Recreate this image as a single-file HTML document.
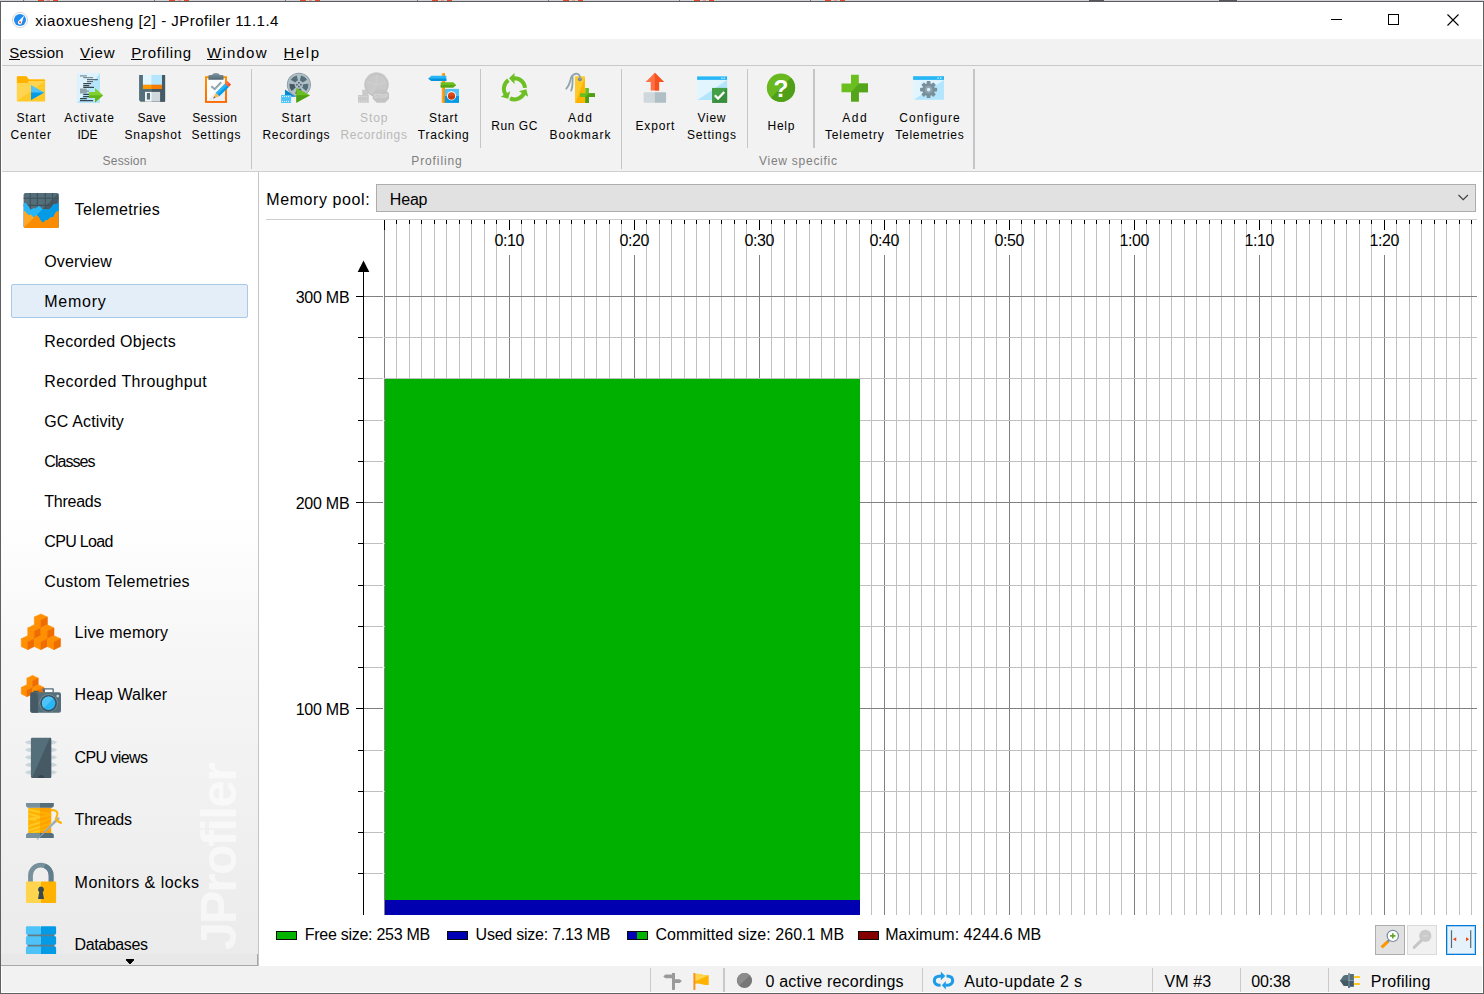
<!DOCTYPE html>
<html lang="en"><head><meta charset="utf-8"><title>xiaoxuesheng [2] - JProfiler 11.1.4</title>
<style>
html,body{margin:0;padding:0;background:#fff;overflow:hidden}
body{width:1484px;height:994px;position:relative;font-family:"Liberation Sans",sans-serif;color:#000}
.a{position:absolute}
.t{position:absolute;white-space:nowrap}
.t u{text-decoration:none;border-bottom:1px solid #000;padding-bottom:0}
svg{position:absolute;overflow:visible}
</style></head><body>
<div class="a" style="left:0px;top:0px;width:1484px;height:1px;background:#d0d2d6;"></div>
<div class="a" style="left:38px;top:0px;width:6px;height:1px;background:#e2492b;"></div>
<div class="a" style="left:47px;top:0px;width:3px;height:1px;background:#ee9a86;"></div>
<div class="a" style="left:53px;top:0px;width:5px;height:1px;background:#e2492b;"></div>
<div class="a" style="left:23px;top:0px;width:1px;height:1px;background:#77797c;"></div>
<div class="a" style="left:169px;top:0px;width:6px;height:1px;background:#e2492b;"></div>
<div class="a" style="left:178px;top:0px;width:3px;height:1px;background:#ee9a86;"></div>
<div class="a" style="left:184px;top:0px;width:5px;height:1px;background:#e2492b;"></div>
<div class="a" style="left:154px;top:0px;width:1px;height:1px;background:#77797c;"></div>
<div class="a" style="left:300px;top:0px;width:6px;height:1px;background:#e2492b;"></div>
<div class="a" style="left:309px;top:0px;width:3px;height:1px;background:#ee9a86;"></div>
<div class="a" style="left:315px;top:0px;width:5px;height:1px;background:#e2492b;"></div>
<div class="a" style="left:285px;top:0px;width:1px;height:1px;background:#77797c;"></div>
<div class="a" style="left:432px;top:0px;width:6px;height:1px;background:#e2492b;"></div>
<div class="a" style="left:441px;top:0px;width:3px;height:1px;background:#ee9a86;"></div>
<div class="a" style="left:447px;top:0px;width:5px;height:1px;background:#e2492b;"></div>
<div class="a" style="left:417px;top:0px;width:1px;height:1px;background:#77797c;"></div>
<div class="a" style="left:563px;top:0px;width:6px;height:1px;background:#e2492b;"></div>
<div class="a" style="left:572px;top:0px;width:3px;height:1px;background:#ee9a86;"></div>
<div class="a" style="left:578px;top:0px;width:5px;height:1px;background:#e2492b;"></div>
<div class="a" style="left:548px;top:0px;width:1px;height:1px;background:#77797c;"></div>
<div class="a" style="left:694px;top:0px;width:6px;height:1px;background:#e2492b;"></div>
<div class="a" style="left:703px;top:0px;width:3px;height:1px;background:#ee9a86;"></div>
<div class="a" style="left:709px;top:0px;width:5px;height:1px;background:#e2492b;"></div>
<div class="a" style="left:679px;top:0px;width:1px;height:1px;background:#77797c;"></div>
<div class="a" style="left:825px;top:0px;width:6px;height:1px;background:#e2492b;"></div>
<div class="a" style="left:834px;top:0px;width:3px;height:1px;background:#ee9a86;"></div>
<div class="a" style="left:840px;top:0px;width:5px;height:1px;background:#e2492b;"></div>
<div class="a" style="left:810px;top:0px;width:1px;height:1px;background:#77797c;"></div>
<div class="a" style="left:1089px;top:0px;width:15px;height:1px;background:#55575a;"></div>
<div class="a" style="left:1219px;top:0px;width:18px;height:1px;background:#55575a;"></div>
<div class="a" style="left:0px;top:1px;width:1484px;height:1px;background:#5a5c5f;"></div>
<div class="a" style="left:1px;top:2px;width:1482px;height:37px;background:#fff;"></div>
<div class="a" style="left:2px;top:39px;width:1480px;height:26px;background:#f2f2f2;"></div>
<div class="a" style="left:2px;top:65px;width:1480px;height:1px;background:#c8c8c8;"></div>
<div class="a" style="left:2px;top:66px;width:1480px;height:105px;background:#f2f2f2;"></div>
<div class="a" style="left:2px;top:171px;width:1480px;height:1px;background:#cfcfcf;"></div>
<div class="a" style="left:1px;top:172px;width:257px;height:782px;background:linear-gradient(180deg,#ffffff 0%,#ffffff 44%,#f6f6f6 62%,#ebebeb 100%);"></div>
<div class="a" style="left:258px;top:172px;width:1px;height:794px;background:#c4c4c4;"></div>
<div class="a" style="left:1px;top:954px;width:257px;height:11px;background:#e8e8e8;border-bottom:1px solid #a8a8a8;"></div>
<div class="a" style="left:2px;top:966px;width:1480px;height:26px;background:#f2f2f2;"></div>
<div class="a" style="left:0px;top:1px;width:1px;height:993px;background:#606060;"></div>
<div class="a" style="left:1483px;top:1px;width:1px;height:993px;background:#5e5e5e;"></div>
<div class="a" style="left:0px;top:993px;width:1484px;height:1px;background:#606060;"></div>
<svg style="left:11px;top:11px" width="18" height="18" viewBox="0 0 18 18">
<circle cx="9" cy="9" r="7.6" fill="#fff" stroke="#d8d8dc" stroke-width="1"/>
<circle cx="9" cy="9" r="6" fill="#1e8bf0"/>
<path d="M13.1 4.6 L10.9 11.6 A2 2 0 1 1 7.6 9.9 Z" fill="#fff"/>
<rect x="8.2" y="10.4" width="1.8" height="1.8" fill="#f4511e"/>
</svg>
<div class="t" style="left:35.30px;top:10.30px;font-size:15px;line-height:21px;letter-spacing:0.488px;color:#000;">xiaoxuesheng [2] - JProfiler 11.1.4</div>
<svg style="left:1320px;top:2px" width="160" height="37" viewBox="1320 2 160 37" shape-rendering="crispEdges">
<rect x="1331" y="19" width="11" height="1" fill="#000"/>
<rect x="1388.5" y="14.5" width="10" height="10" fill="none" stroke="#000" stroke-width="1"/>
<path d="M1447.5 14.5 L1458.5 25.5 M1458.5 14.5 L1447.5 25.5" stroke="#000" stroke-width="1.1" fill="none" shape-rendering="auto"/>
</svg>
<div class="t" style="left:9.30px;top:41.50px;font-size:15px;line-height:21px;letter-spacing:0.156px;color:#000;">Session</div>
<div class="a" style="left:9px;top:59px;width:11px;height:1px;background:#000;"></div>
<div class="t" style="left:79.90px;top:41.50px;font-size:15px;line-height:21px;letter-spacing:0.819px;color:#000;">View</div>
<div class="a" style="left:80px;top:59px;width:11px;height:1px;background:#000;"></div>
<div class="t" style="left:131.30px;top:41.50px;font-size:15px;line-height:21px;letter-spacing:0.713px;color:#000;">Profiling</div>
<div class="a" style="left:131px;top:59px;width:11px;height:1px;background:#000;"></div>
<div class="t" style="left:207.00px;top:41.50px;font-size:15px;line-height:21px;letter-spacing:1.230px;color:#000;">Window</div>
<div class="a" style="left:207px;top:59px;width:15px;height:1px;background:#000;"></div>
<div class="t" style="left:283.50px;top:41.50px;font-size:15px;line-height:21px;letter-spacing:1.550px;color:#000;">Help</div>
<div class="a" style="left:284px;top:59px;width:12px;height:1px;background:#000;"></div>
<div class="a" style="left:251px;top:69px;width:1px;height:100px;background:#c6c6c6;"></div>
<div class="a" style="left:480px;top:69px;width:1px;height:79px;background:#c6c6c6;"></div>
<div class="a" style="left:621px;top:69px;width:1px;height:100px;background:#c6c6c6;"></div>
<div class="a" style="left:747px;top:69px;width:1px;height:79px;background:#c6c6c6;"></div>
<div class="a" style="left:813px;top:69px;width:2px;height:79px;background:#c6c6c6;"></div>
<div class="a" style="left:973px;top:69px;width:2px;height:100px;background:#c6c6c6;"></div>
<div class="t" style="left:16.45px;top:109.94px;font-size:12px;line-height:17px;letter-spacing:0.839px;color:#000;">Start</div>
<div class="t" style="left:10.55px;top:126.94px;font-size:12px;line-height:17px;letter-spacing:0.896px;color:#000;">Center</div>
<div class="t" style="left:64.20px;top:109.94px;font-size:12px;line-height:17px;letter-spacing:1.002px;color:#000;">Activate</div>
<div class="t" style="left:77.55px;top:126.94px;font-size:12px;line-height:17px;letter-spacing:-0.052px;color:#000;">IDE</div>
<div class="t" style="left:137.45px;top:109.94px;font-size:12px;line-height:17px;letter-spacing:0.316px;color:#000;">Save</div>
<div class="t" style="left:124.50px;top:126.94px;font-size:12px;line-height:17px;letter-spacing:0.842px;color:#000;">Snapshot</div>
<div class="t" style="left:192.30px;top:109.94px;font-size:12px;line-height:17px;letter-spacing:0.318px;color:#000;">Session</div>
<div class="t" style="left:191.50px;top:126.94px;font-size:12px;line-height:17px;letter-spacing:0.806px;color:#000;">Settings</div>
<div class="t" style="left:281.50px;top:109.94px;font-size:12px;line-height:17px;letter-spacing:0.914px;color:#000;">Start</div>
<div class="t" style="left:262.40px;top:126.94px;font-size:12px;line-height:17px;letter-spacing:0.722px;color:#000;">Recordings</div>
<div class="t" style="left:360.00px;top:109.94px;font-size:12px;line-height:17px;letter-spacing:0.905px;color:#b9b9b9;">Stop</div>
<div class="t" style="left:340.45px;top:126.94px;font-size:12px;line-height:17px;letter-spacing:0.645px;color:#b9b9b9;">Recordings</div>
<div class="t" style="left:428.90px;top:109.94px;font-size:12px;line-height:17px;letter-spacing:0.864px;color:#000;">Start</div>
<div class="t" style="left:417.80px;top:126.94px;font-size:12px;line-height:17px;letter-spacing:0.776px;color:#000;">Tracking</div>
<div class="t" style="left:491.25px;top:118.34px;font-size:12px;line-height:17px;letter-spacing:0.550px;color:#000;">Run GC</div>
<div class="t" style="left:568.00px;top:109.94px;font-size:12px;line-height:17px;letter-spacing:1.324px;color:#000;">Add</div>
<div class="t" style="left:549.60px;top:126.94px;font-size:12px;line-height:17px;letter-spacing:0.969px;color:#000;">Bookmark</div>
<div class="t" style="left:635.50px;top:118.34px;font-size:12px;line-height:17px;letter-spacing:0.823px;color:#000;">Export</div>
<div class="t" style="left:697.60px;top:109.94px;font-size:12px;line-height:17px;letter-spacing:0.669px;color:#000;">View</div>
<div class="t" style="left:686.90px;top:126.94px;font-size:12px;line-height:17px;letter-spacing:0.834px;color:#000;">Settings</div>
<div class="t" style="left:767.55px;top:118.34px;font-size:12px;line-height:17px;letter-spacing:0.740px;color:#000;">Help</div>
<div class="t" style="left:842.25px;top:109.94px;font-size:12px;line-height:17px;letter-spacing:1.474px;color:#000;">Add</div>
<div class="t" style="left:825.00px;top:126.94px;font-size:12px;line-height:17px;letter-spacing:0.848px;color:#000;">Telemetry</div>
<div class="t" style="left:899.20px;top:109.94px;font-size:12px;line-height:17px;letter-spacing:1.071px;color:#000;">Configure</div>
<div class="t" style="left:895.35px;top:126.94px;font-size:12px;line-height:17px;letter-spacing:0.694px;color:#000;">Telemetries</div>
<div class="t" style="left:102.60px;top:152.64px;font-size:12px;line-height:17px;letter-spacing:0.185px;color:#7e7e7e;">Session</div>
<div class="t" style="left:411.25px;top:152.64px;font-size:12px;line-height:17px;letter-spacing:0.893px;color:#7e7e7e;">Profiling</div>
<div class="t" style="left:759.00px;top:152.64px;font-size:12px;line-height:17px;letter-spacing:0.738px;color:#7e7e7e;">View specific</div>
<svg style="left:0;top:66px" width="1000" height="106" viewBox="0 66 1000 106">
<!-- Start Center: folder + play -->
<g>
<path d="M16.9 77.1 q0 -0.8 0.8 -0.8 h8.2 q0.7 0 1.1 0.6 l1.8 2.7 h15.5 q0.85 0 0.85 0.85 v20.2 q0 0.85 -0.85 0.85 h-26.6 q-0.8 0 -0.8 -0.85 z" fill="#ffca28"/>
<path d="M16.9 82.9 H27 L29.2 80.9 H45.15 L16.9 100.9 z" fill="#ffd54f"/>
<path d="M16.9 77.1 q0 -0.8 0.8 -0.8 h8.2 q0.7 0 1.1 0.6 l1.8 2.7 h15.5 q0.85 0 0.85 0.85 v0.5 h-16.2 l-1.6 2 h-10.45 z" fill="#ffb300"/>
<path d="M31 84.9 L44.1 92.5 L31 100.1 z" fill="#4fc3f7"/>
<path d="M31 92.5 H44.1 L31 100.1 z" fill="#039be5"/>
</g>
<!-- Activate IDE -->
<g>
<rect x="77.1" y="73" width="22.9" height="30" fill="#b3e5fc"/>
<path d="M77.1 73 H100 L77.1 103 z" fill="#def3fd"/>
<g stroke-width="1.25" fill="none">
<path d="M80 75.9 h6.8" stroke="#90a4ae" stroke-width="1.6"/>
<path d="M83.2 77.6 h9.9" stroke="#78909c"/>
<path d="M87 79.5 h10.9 M87 81.5 h6.1" stroke="#546e7a"/>
<path d="M83.2 83.5 h8 M83.2 85.5 h6.1 M83.2 87.4 h10.8 M83.2 94.4 h6 M83.2 96.5 h6 M80 98.5 h6.8 M80 100.5 h13.1" stroke="#37474f"/>
</g>
<path d="M80 88.6 h6.8 v1.7 h2.2 v1.8 h-2.2 v1.5 h-6.8 z" fill="#90a4ae"/>
<path d="M89 92.1 h6 v-4.2 l8.1 7.4 l-8.1 7.3 v-4.6 h-6 z" fill="#7fd12f"/>
<path d="M89 95.3 h14.1 l-8.1 7.3 v-4.6 h-6 z" fill="#64b51c"/>
</g>
<!-- Save Snapshot -->
<g>
<path d="M139.1 74.9 h26 v26 q0 0.75 -0.75 0.75 h-23.8 l-1.45 -1.45 z" fill="#546e7a"/>
<path d="M151.9 74.9 h13.2 v26 q0 0.75 -0.75 0.75 h-12.45 z" fill="#455a64"/>
<rect x="142.9" y="74.9" width="9" height="10" fill="#e1f5fe"/>
<rect x="151.9" y="74.9" width="10.1" height="10" fill="#b3e5fc"/>
<rect x="142.9" y="84.8" width="9" height="4.2" fill="#ff9800"/>
<rect x="151.9" y="84.8" width="10.1" height="4.2" fill="#f57c00"/>
<rect x="145" y="91.9" width="6.9" height="9.75" fill="#f3f5f6"/>
<rect x="151.9" y="91.9" width="8.2" height="9.75" fill="#cfd8dc"/>
<rect x="146.9" y="93" width="3.1" height="6.5" fill="#546e7a"/>
</g>
<!-- Session Settings -->
<g>
<defs><linearGradient id="cbg" x1="0" y1="0" x2="0" y2="1"><stop offset="0" stop-color="#ff9100"/><stop offset="1" stop-color="#ff6a00"/></linearGradient>
<linearGradient id="clg" x1="0" y1="0" x2="0" y2="1"><stop offset="0" stop-color="#8297a2"/><stop offset="1" stop-color="#4f6873"/></linearGradient></defs>
<rect x="206" y="77.2" width="20" height="24.7" fill="#fdfdfd" stroke="url(#cbg)" stroke-width="2"/>
<path d="M207.5 100.9 L225 81 V100.9 z" fill="#eceff1"/>
<path d="M208.4 79.7 v-3.6 q0 -1 1 -1 h2.4 q1.2 -2.1 4.1 -2.1 t4.1 2.1 h2.5 q1 0 1 1 v3.6 z" fill="url(#clg)"/>
<path d="M211.3 86.2 l3.4 3 l6.5 -6.9" stroke="#90a4ae" stroke-width="2" fill="none"/>
<path d="M225.1 83.7 L228.9 87.1 L219.3 96.3 L215.9 92.9 z" fill="#039be5"/>
<path d="M225.1 83.7 L227 85.4 L217.6 94.6 L215.9 92.9 z" fill="#29b6f6"/>
<path d="M225.1 83.7 L227.5 81.2 L231 84.6 L228.9 87.1 z" fill="#f4511e"/>
<path d="M225.1 83.7 L227.5 81.2 L229.2 82.9 L227 85.4 z" fill="#ff7043"/>
<path d="M215.9 92.9 L219.3 96.3 L213.2 98.6 z" fill="#ffb74d"/>
<path d="M214.2 96.3 L215.6 97.7 L213.2 98.6 z" fill="#546e7a"/>
</g>
<!-- Start Recordings -->
<g>
<path d="M285 89.6 L296.3 96.7 H291.1 V95 H285 z" fill="#0288d1"/>
<rect x="281.1" y="95" width="10" height="8" fill="#4fc3f7"/>
<path d="M282 96.6 h8.4 M282 101.5 h8.4" stroke="#e1f5fe" stroke-width="1" stroke-dasharray="1.1 0.9"/>
<circle cx="298.9" cy="84.7" r="12.05" fill="#8397a1"/>
<circle cx="298.9" cy="84.7" r="11.3" fill="#b0bec5"/>
<path d="M300.45 77.98 A6.9 6.9 0 0 1 304.81 81.15" stroke="#546e7a" stroke-width="5.3" fill="none"/><path d="M305.77 84.10 A6.9 6.9 0 0 1 304.11 89.23" stroke="#546e7a" stroke-width="5.3" fill="none"/><path d="M301.60 91.05 A6.9 6.9 0 0 1 296.20 91.05" stroke="#455a64" stroke-width="5.3" fill="none"/><path d="M293.69 89.23 A6.9 6.9 0 0 1 292.03 84.10" stroke="#455a64" stroke-width="5.3" fill="none"/><path d="M292.99 81.15 A6.9 6.9 0 0 1 297.35 77.98" stroke="#546e7a" stroke-width="5.3" fill="none"/>
<g fill="#455a64"><rect x="296.2" y="84.0" width="1.5" height="1.5"/><rect x="300.09999999999997" y="84.0" width="1.5" height="1.5"/><rect x="298.15" y="82.0" width="1.5" height="1.5"/><rect x="298.15" y="85.9" width="1.5" height="1.5"/></g>
<path d="M296.3 87.9 L310 95.35 L296.3 102.8 z" fill="#6abf1e"/>
<path d="M296.3 95.35 H310 L296.3 102.8 z" fill="#4e9f16"/>
</g>
<!-- Stop Recordings (disabled) -->
<g fill="#c9c9c9">
<circle cx="376.5" cy="84.6" r="12.3"/>
<rect x="358" y="95" width="10.8" height="7.7"/>
<path d="M362.2 89.7 h6 v5.5 h-6 z"/>
<path d="M376.7 89.2 h8.3 l4 4 v5.6 l-4 4 h-8.3 l-4 -4 v-5.6 z" fill="#c4c4c4"/>
</g>
<g stroke="#cfcfcf" stroke-width="1.8" opacity=".9"><path d="M376.5 85 v-10.5 M376.5 85 l10 -3.2 M376.5 85 l-10 -3.2 M376.5 85 l-6.2 8.5"/></g>
<circle cx="376.5" cy="85" r="11" fill="none" stroke="#c2c2c2" stroke-width="1"/>
<path d="M359 96.6 h8.4 M359 101.2 h8.4" stroke="#dedede" stroke-width="1" stroke-dasharray="1.2 1"/>
<text x="380.8" y="98.2" font-family="Liberation Sans, sans-serif" font-size="4.6" font-weight="bold" fill="#dcdcdc" text-anchor="middle" letter-spacing="0.3">STOP</text>
<!-- Start Tracking -->
<g>
<rect x="441.8" y="73.2" width="3.1" height="29.7" fill="#ffa726"/>
<rect x="443.4" y="73.2" width="1.5" height="29.7" fill="#fb8c00"/>
<path d="M428.2 78.4 l3.2 -2.7 h14.9 v5.4 h-14.9 z" fill="#29b6f6"/>
<path d="M428.2 78.4 h18.1 v2.7 h-14.9 z" fill="#0393dd"/>
<path d="M440.7 82.2 h12.5 l3 2.7 l-3 2.7 h-12.5 z" fill="#6abf1e"/>
<path d="M440.7 84.9 h15.5 l-3 2.7 h-12.5 z" fill="#58a618"/>
<rect x="444.9" y="88.9" width="14.1" height="7" fill="#4fc3f7"/>
<rect x="444.9" y="95.9" width="14.1" height="7" fill="#039be5"/>
<circle cx="451.5" cy="95.8" r="4.6" fill="#f3f8fb"/>
<circle cx="451.5" cy="95.8" r="3.6" fill="#e04a17"/>
<path d="M447.9 95.8 a3.6 3.6 0 0 0 7.2 0 z" fill="#c8390b"/>
</g>
</svg>
<svg style="left:0;top:66px" width="1000" height="106" viewBox="0 66 1000 106">
<!-- Run GC -->
<path d="M527.05 87.70 A12.6 12.6 0 0 0 514.50 76.20 L514.50 73.00 L508.94 78.34 L514.50 83.90 L514.50 80.20 A8.6 8.6 0 0 1 523.07 88.05 z M507.27 78.48 A12.6 12.6 0 0 0 503.59 95.10 L500.82 96.70 L508.22 98.85 L510.26 91.25 L507.05 93.10 A8.6 8.6 0 0 1 509.57 81.76 z M509.18 100.22 A12.6 12.6 0 0 0 525.41 95.10 L528.18 96.70 L526.34 89.21 L518.74 91.25 L521.95 93.10 A8.6 8.6 0 0 1 510.87 96.59 z" fill="#6cc024"/>
<!-- Add Bookmark -->
<g>
<rect x="575" y="76.2" width="9.9" height="26.7" rx="0.6" fill="#ffca28"/>
<path d="M584.9 77.5 v24.8 q0 0.6 -0.6 0.6 h-8.8 z" fill="#ffb300"/>
<circle cx="579.9" cy="79.3" r="1.7" fill="#5c7a99" stroke="#78909c" stroke-width="0.6"/>
<path d="M580 79 q0.2 -5.2 -3.6 -5.3 q-3.3 0.1 -5.3 3.8 q-1.8 8 -4.8 11.2" stroke="#90a4ae" stroke-width="1.8" fill="none" stroke-linecap="round"/>
<path d="M572.4 76 q0.8 9 -1.2 14.6" stroke="#90a4ae" stroke-width="1.8" fill="none" stroke-linecap="round"/>
<path d="M585.2 88.1 h3.7 v5.1 h6.1 v3.7 h-6.1 v6 h-3.7 v-6 h-5.2 v-3.7 h5.2 z" fill="#6abf1e"/>
<path d="M588.9 93.2 h6.1 v3.7 h-6.1 v6 h-3.7 v-6 z" fill="#4e9f16"/>
</g>
<!-- Export -->
<g>
<path d="M654.8 72.7 L664 81.9 H659.1 V90.6 H650.7 V81.9 H645.6 z" fill="#ff7043"/>
<path d="M654.8 72.7 L664 81.9 H659.1 V90.6 H654.8 z" fill="#f4511e"/>
<path d="M644.4 92.3 h11 v10.5 h-11 q-0.8 0 -0.8 -0.8 v-8.9 q0 -0.8 0.8 -0.8 z" fill="#cfd8dc"/>
<path d="M654.9 92.3 h10.4 q0.8 0 0.8 0.8 v8.9 q0 0.8 -0.8 0.8 h-10.4 z" fill="#b0bec5"/>
</g>
<!-- View Settings -->
<g>
<rect x="697.1" y="76.4" width="30" height="23.7" fill="#e1f5fe"/>
<path d="M727.1 79.9 V100.1 H697.6 z" fill="#b3e5fc"/>
<rect x="697.1" y="76.4" width="30" height="3.5" fill="#29b6f6"/>
<rect x="721.3" y="77.6" width="1.3" height="1.2" fill="#e1f5fe"/><rect x="723.6" y="77.6" width="1.3" height="1.2" fill="#e1f5fe"/>
<rect x="712" y="87.9" width="15.1" height="14.9" fill="#43a047"/>
<path d="M727.1 87.9 V102.8 H712 z" fill="#388e3c"/>
<path d="M714.8 95.3 l3.2 3.3 l6.3 -6.6" stroke="#fff" stroke-width="2.3" fill="none"/>
</g>
<!-- Help -->
<g>
<circle cx="781" cy="87.8" r="14.2" fill="#6ab820"/>
<path d="M791.04 77.76 A14.2 14.2 0 0 1 770.96 97.84 z" fill="#4f9f18"/>
<text x="781" y="96.6" font-family="Liberation Sans, sans-serif" font-weight="bold" font-size="24.5" fill="#fff" text-anchor="middle">?</text>
</g>
<!-- Add Telemetry -->
<g>
<path d="M851 74.7 h7.8 v8.8 h9.2 v8.8 h-9.2 v9.1 h-7.8 v-9.1 h-9.5 v-8.8 h9.5 z" fill="#6abf1e"/>
<path d="M858.8 83.5 h9.2 v8.8 h-9.2 v9.1 h-7.8 v-9.1 z" fill="#55a51c"/>
</g>
<!-- Configure Telemetries -->
<g>
<rect x="913.1" y="76.2" width="30.9" height="23.6" fill="#e1f5fe"/>
<path d="M944 79.9 V99.8 H913.8 z" fill="#b3e5fc"/>
<rect x="913.1" y="76.2" width="30.9" height="3.7" fill="#29b6f6"/>
<rect x="937.5" y="77.5" width="1.4" height="1.2" fill="#e1f5fe"/><rect x="940" y="77.5" width="1.4" height="1.2" fill="#e1f5fe"/>
<g transform="translate(928.6 89.6)">
<g fill="#78909c">
<circle r="6.3"/>
<rect x="-1.9" y="-8.5" width="3.8" height="17" rx="0.7"/>
<rect x="-1.9" y="-8.5" width="3.8" height="17" rx="0.7" transform="rotate(45)"/>
<rect x="-1.9" y="-8.5" width="3.8" height="17" rx="0.7" transform="rotate(90)"/>
<rect x="-1.9" y="-8.5" width="3.8" height="17" rx="0.7" transform="rotate(135)"/>
</g>
<circle r="3.8" fill="#90a4ae"/>
<circle r="1.8" fill="#d9eefb"/>
</g>
</g>
</svg>
<div class="a" style="left:11px;top:284px;width:237px;height:34px;background:#e4eef8;box-sizing:border-box;border:1px solid #a8c9e8;border-radius:2px;"></div>
<div class="t" style="left:100px;top:830px;width:280px;height:50px;line-height:50px;font-size:50px;font-weight:bold;color:rgba(255,255,255,.55);letter-spacing:-1.9px;transform-origin:0 0;transform:translate(94px,120px) rotate(-90deg);">JProfiler</div>
<div class="t" style="left:74.60px;top:199.06px;font-size:16px;line-height:22px;letter-spacing:0.339px;color:#000;">Telemetries</div>
<div class="t" style="left:44.30px;top:251.26px;font-size:16px;line-height:22px;letter-spacing:0.103px;color:#000;">Overview</div>
<div class="t" style="left:44.30px;top:291.26px;font-size:16px;line-height:22px;letter-spacing:0.723px;color:#000;">Memory</div>
<div class="t" style="left:44.30px;top:331.26px;font-size:16px;line-height:22px;letter-spacing:0.222px;color:#000;">Recorded Objects</div>
<div class="t" style="left:44.30px;top:371.26px;font-size:16px;line-height:22px;letter-spacing:0.396px;color:#000;">Recorded Throughput</div>
<div class="t" style="left:44.30px;top:411.26px;font-size:16px;line-height:22px;letter-spacing:0.127px;color:#000;">GC Activity</div>
<div class="t" style="left:44.30px;top:451.26px;font-size:16px;line-height:22px;letter-spacing:-0.951px;color:#000;">Classes</div>
<div class="t" style="left:44.30px;top:491.26px;font-size:16px;line-height:22px;letter-spacing:-0.250px;color:#000;">Threads</div>
<div class="t" style="left:44.30px;top:531.26px;font-size:16px;line-height:22px;letter-spacing:-0.675px;color:#000;">CPU Load</div>
<div class="t" style="left:44.30px;top:571.26px;font-size:16px;line-height:22px;letter-spacing:0.248px;color:#000;">Custom Telemetries</div>
<div class="t" style="left:74.60px;top:622.36px;font-size:16px;line-height:22px;letter-spacing:0.182px;color:#000;">Live memory</div>
<div class="t" style="left:74.60px;top:684.46px;font-size:16px;line-height:22px;letter-spacing:0.052px;color:#000;">Heap Walker</div>
<div class="t" style="left:74.60px;top:747.36px;font-size:16px;line-height:22px;letter-spacing:-0.605px;color:#000;">CPU views</div>
<div class="t" style="left:74.60px;top:809.46px;font-size:16px;line-height:22px;letter-spacing:-0.216px;color:#000;">Threads</div>
<div class="t" style="left:74.60px;top:872.16px;font-size:16px;line-height:22px;letter-spacing:0.469px;color:#000;">Monitors &amp; locks</div>
<div class="t" style="left:74.60px;top:934.46px;font-size:16px;line-height:22px;letter-spacing:-0.387px;color:#000;">Databases</div>
<div class="a" style="left:257px;top:954px;width:1px;height:12px;background:#a8a8a8;"></div>
<svg style="left:120px;top:955px" width="20" height="10" viewBox="120 955 20 10"><path d="M126 959.5 h8 M126.3 960 h7.4 l-3.7 4 z" fill="#000" stroke="#000" stroke-width="1"/></svg>
<svg style="left:0;top:172px" width="258" height="782" viewBox="0 172 258 782">
<g>
<clipPath id="tcl"><rect x="23.6" y="192.9" width="35.1" height="35.1" rx="1.8"/></clipPath>
<clipPath id="tdg"><path d="M58.7 192.9 V228 H23.6 z"/></clipPath>
<g clip-path="url(#tcl)">
<rect x="23" y="192" width="36" height="37" fill="#546e7a"/>
<rect x="23" y="192" width="36" height="37" fill="#455a64" clip-path="url(#tdg)"/>
<g stroke="#3f525c" stroke-width="1.1"><path d="M30.3 192 v20 M37.4 192 v20 M45.3 192 v20 M52.5 192 v20 M23 198.2 h36 M23 205.4 h36"/></g>
<path d="M23.6 203.3 L25.9 203 L28 205.4 L30.3 209.5 L31.9 209.3 L33.5 207.9 L35.1 208.6 L36.5 207.4 L38.8 205.8 L41.1 207.4 L43 209.5 L45.8 209.3 L48.1 209.8 L50.4 208.4 L53.6 204.2 L56 204.4 L57.8 203 L58.7 203.3 L58.7 228 L23.6 228 z" fill="#29b6f6"/>
<path d="M23.6 203.3 L25.9 203 L28 205.4 L30.3 209.5 L31.9 209.3 L33.5 207.9 L35.1 208.6 L36.5 207.4 L38.8 205.8 L41.1 207.4 L43 209.5 L45.8 209.3 L48.1 209.8 L50.4 208.4 L53.6 204.2 L56 204.4 L57.8 203 L58.7 203.3 L58.7 228 L23.6 228 z" fill="#039be5" clip-path="url(#tdg)"/>
<path d="M23.6 211.1 L25.4 211.4 L28.6 215.3 L31 214.6 L33.7 217.6 L36.5 214.9 L38.4 216.7 L41.1 221.3 L43.2 223 L45.3 220.4 L48.1 219.9 L50.4 217.6 L53.2 217.6 L56 212.1 L58.7 210.9 L58.7 228 L23.6 228 z" fill="#ffa726"/>
<path d="M23.6 211.1 L25.4 211.4 L28.6 215.3 L31 214.6 L33.7 217.6 L36.5 214.9 L38.4 216.7 L41.1 221.3 L43.2 223 L45.3 220.4 L48.1 219.9 L50.4 217.6 L53.2 217.6 L56 212.1 L58.7 210.9 L58.7 228 L23.6 228 z" fill="#fb8c00" clip-path="url(#tdg)"/>
</g></g>
<g><path d="M40.9 614.0 L47.449999999999996 617.1 L40.9 620.2 L34.35 617.1 z" fill="#ff8f00" stroke="#ff8f00" stroke-width=".6"/><path d="M34.35 617.1 L40.9 620.2 L40.9 627.95 L34.35 624.85 z" fill="#ff8f00" stroke="#ff8f00" stroke-width=".6"/><path d="M47.449999999999996 617.1 L40.9 620.2 L40.9 627.95 L47.449999999999996 624.85 z" fill="#ef6c00" stroke="#ef6c00" stroke-width=".5"/><path d="M34.35 624.85 L40.9 627.95 L34.35 631.0500000000001 L27.8 627.95 z" fill="#ff8f00" stroke="#ff8f00" stroke-width=".6"/><path d="M27.8 627.95 L34.35 631.0500000000001 L34.35 638.8000000000001 L27.8 635.7 z" fill="#ff8f00" stroke="#ff8f00" stroke-width=".6"/><path d="M40.9 627.95 L34.35 631.0500000000001 L34.35 638.8000000000001 L40.9 635.7 z" fill="#ef6c00" stroke="#ef6c00" stroke-width=".5"/><path d="M47.449999999999996 624.85 L53.99999999999999 627.95 L47.449999999999996 631.0500000000001 L40.9 627.95 z" fill="#ff8f00" stroke="#ff8f00" stroke-width=".6"/><path d="M40.9 627.95 L47.449999999999996 631.0500000000001 L47.449999999999996 638.8000000000001 L40.9 635.7 z" fill="#ff8f00" stroke="#ff8f00" stroke-width=".6"/><path d="M53.99999999999999 627.95 L47.449999999999996 631.0500000000001 L47.449999999999996 638.8000000000001 L53.99999999999999 635.7 z" fill="#ef6c00" stroke="#ef6c00" stroke-width=".5"/><path d="M27.799999999999997 635.7 L34.349999999999994 638.8000000000001 L27.799999999999997 641.9000000000001 L21.249999999999996 638.8000000000001 z" fill="#ff8f00" stroke="#ff8f00" stroke-width=".6"/><path d="M21.249999999999996 638.8000000000001 L27.799999999999997 641.9000000000001 L27.799999999999997 649.6500000000001 L21.249999999999996 646.5500000000001 z" fill="#ff8f00" stroke="#ff8f00" stroke-width=".6"/><path d="M34.349999999999994 638.8000000000001 L27.799999999999997 641.9000000000001 L27.799999999999997 649.6500000000001 L34.349999999999994 646.5500000000001 z" fill="#ef6c00" stroke="#ef6c00" stroke-width=".5"/><path d="M40.9 635.7 L47.449999999999996 638.8000000000001 L40.9 641.9000000000001 L34.35 638.8000000000001 z" fill="#ff8f00" stroke="#ff8f00" stroke-width=".6"/><path d="M34.35 638.8000000000001 L40.9 641.9000000000001 L40.9 649.6500000000001 L34.35 646.5500000000001 z" fill="#ff8f00" stroke="#ff8f00" stroke-width=".6"/><path d="M47.449999999999996 638.8000000000001 L40.9 641.9000000000001 L40.9 649.6500000000001 L47.449999999999996 646.5500000000001 z" fill="#ef6c00" stroke="#ef6c00" stroke-width=".5"/><path d="M54.0 635.7 L60.55 638.8000000000001 L54.0 641.9000000000001 L47.45 638.8000000000001 z" fill="#ff8f00" stroke="#ff8f00" stroke-width=".6"/><path d="M47.45 638.8000000000001 L54.0 641.9000000000001 L54.0 649.6500000000001 L47.45 646.5500000000001 z" fill="#ff8f00" stroke="#ff8f00" stroke-width=".6"/><path d="M60.55 638.8000000000001 L54.0 641.9000000000001 L54.0 649.6500000000001 L60.55 646.5500000000001 z" fill="#ef6c00" stroke="#ef6c00" stroke-width=".5"/></g>
<g><path d="M32.6 675.4 L38.25 678.15 L32.6 680.9 L26.950000000000003 678.15 z" fill="#ff8f00" stroke="#ff8f00" stroke-width=".6"/><path d="M26.950000000000003 678.15 L32.6 680.9 L32.6 687.4 L26.950000000000003 684.65 z" fill="#ff8f00" stroke="#ff8f00" stroke-width=".6"/><path d="M38.25 678.15 L32.6 680.9 L32.6 687.4 L38.25 684.65 z" fill="#ef6c00" stroke="#ef6c00" stroke-width=".5"/><path d="M26.950000000000003 684.65 L32.6 687.4 L26.950000000000003 690.15 L21.300000000000004 687.4 z" fill="#ff8f00" stroke="#ff8f00" stroke-width=".6"/><path d="M21.300000000000004 687.4 L26.950000000000003 690.15 L26.950000000000003 696.65 L21.300000000000004 693.9 z" fill="#ff8f00" stroke="#ff8f00" stroke-width=".6"/><path d="M32.6 687.4 L26.950000000000003 690.15 L26.950000000000003 696.65 L32.6 693.9 z" fill="#ef6c00" stroke="#ef6c00" stroke-width=".5"/><path d="M38.25 684.65 L43.9 687.4 L38.25 690.15 L32.6 687.4 z" fill="#ff8f00" stroke="#ff8f00" stroke-width=".6"/><path d="M32.6 687.4 L38.25 690.15 L38.25 696.65 L32.6 693.9 z" fill="#ff8f00" stroke="#ff8f00" stroke-width=".6"/><path d="M43.9 687.4 L38.25 690.15 L38.25 696.65 L43.9 693.9 z" fill="#ef6c00" stroke="#ef6c00" stroke-width=".5"/></g>
<g>
<path d="M42.7 692.5 v-3.3 q0 -1 1 -1 h9.1 q1 0 1 1 v3.3 z" fill="#546e7a"/>
<rect x="30.3" y="692.2" width="30.7" height="20.5" rx="2" fill="#546e7a"/>
<path d="M30.3 694.2 q0 -2 2 -2 h2.5 q3.2 0.6 3.2 4 v16.5 h-5.7 q-2 0 -2 -2 z" fill="#455a64"/>
<rect x="33.5" y="690.8" width="5" height="1.6" fill="#455a64"/>
<rect x="45" y="689.6" width="7.5" height="2.4" rx="0.5" fill="#fff"/>
<circle cx="57.7" cy="696.1" r="1.3" fill="#cfd8dc"/>
<circle cx="48.6" cy="703.3" r="9.2" fill="#78909c"/>
<circle cx="48.6" cy="703.3" r="8.6" fill="#546e7a"/>
<circle cx="48.6" cy="703.3" r="8.1" fill="#3c4f58"/>
<circle cx="48.6" cy="703.3" r="6.7" fill="#29b6f6"/>
<path d="M53.34 698.56 A6.7 6.7 0 0 0 43.86 708.04 z" fill="#4fc3f7"/>
</g>
<g><path d="M31 740.4 h-3 l-3.2 1.9 l3.2 1.9 h3 z M51 740.4 h3 l3.3 1.9 l-3.3 1.9 h-3 z" fill="#cdd6da"/><path d="M31 747.9 h-3 l-3.2 1.9 l3.2 1.9 h3 z M51 747.9 h3 l3.3 1.9 l-3.3 1.9 h-3 z" fill="#cdd6da"/><path d="M31 755.4 h-3 l-3.2 1.9 l3.2 1.9 h3 z M51 755.4 h3 l3.3 1.9 l-3.3 1.9 h-3 z" fill="#cdd6da"/><path d="M31 763.0 h-3 l-3.2 1.9 l3.2 1.9 h3 z M51 763.0 h3 l3.3 1.9 l-3.3 1.9 h-3 z" fill="#cdd6da"/><path d="M31 770.4 h-3 l-3.2 1.9 l3.2 1.9 h3 z M51 770.4 h3 l3.3 1.9 l-3.3 1.9 h-3 z" fill="#cdd6da"/>
<rect x="30.9" y="737.8" width="20.3" height="40.1" rx="1.2" fill="#546e7a"/>
<path d="M50 737.8 q1.2 0 1.2 1.2 v37.7 q0 1.2 -1.2 1.2 h-18 z" fill="#455a64"/>
<path d="M38 777.9 a3 3 0 0 1 6 0 z" fill="#37474f"/>
</g>
<g>
<rect x="28.2" y="807.6" width="11.8" height="25.6" fill="#ffb300"/>
<rect x="40" y="807.6" width="11.2" height="25.6" fill="#ffa000"/>
<g stroke="#ffca28" stroke-width="2" fill="none" opacity=".9"><path d="M28.2 809.6 l11.8 2.6 M28.2 813.6 l11.8 3.4 M40 817.6 l-11.8 1.2 l8 1.2 M28.2 826.4 l11.8 -4.2 M28.2 830.6 l11.8 -3.6 M31 833 l9 -2.6"/></g>
<g stroke="#ffb300" stroke-width="2" fill="none" opacity=".9"><path d="M40 812.2 l11.2 1.8 M40 817 l11.2 -2 M40 822.2 l11.2 -4 M40 827 l11.2 -3.8 M40 830.6 l8 -2.4"/></g>
<path d="M26 803 h14 v4.8 h-12.2 l-1.8 -1.6 z" fill="#78909c"/><path d="M40 803 h13.8 v3.2 l-1.8 1.6 h-12 z" fill="#546e7a"/>
<path d="M27.8 833 h12.2 v4.9 h-14 v-3.3 z" fill="#78909c"/><path d="M40 833 h12 l1.8 1.6 v3.3 h-13.8 z" fill="#546e7a"/>
<path d="M51.2 810 q5.6 0 6.2 3 q0.4 1.6 -1.4 5.4 q0.6 3 4.9 4.3" stroke="#ffb300" stroke-width="2" fill="none" stroke-linecap="round"/>
<path d="M59.6 817.6 L57 816.9 L36.9 839.7 L59.6 819.6 z" fill="#b0bec5"/>
<path d="M58.4 818.4 L36.9 839.7" stroke="#78909c" stroke-width="0.8"/>
<path d="M56 818.6 q0.8 2.6 4.9 4.1" stroke="#ffb300" stroke-width="2" fill="none" stroke-linecap="round"/>
</g>
<g>
<path d="M30.5 882 v-6.6 a10.3 10.3 0 0 1 20.6 0 v6.6" stroke="#78909c" stroke-width="4.8" fill="none"/>
<path d="M44.8 865.9 a10.3 10.3 0 0 1 6.3 9.5 v6.6" stroke="#607d8b" stroke-width="4.8" fill="none"/>
<rect x="25.9" y="881.4" width="15.1" height="21.5" rx="1" fill="#ffd54f"/>
<path d="M41 881.4 h14.1 q1 0 1 1 v19.5 q0 1 -1 1 h-14.1 z" fill="#ffb300"/>
<path d="M41 886.6 a3 3 0 0 1 1.8 5.4 l1.2 6.9 h-6 l1.2 -6.9 a3 3 0 0 1 1.8 -5.4 z" fill="#37474f"/>
</g>
<g>
<rect x="27.5" y="933" width="27" height="4" fill="#607d8b"/><rect x="27.5" y="943.5" width="27" height="4" fill="#607d8b"/>
<rect x="25.9" y="926.3" width="15.1" height="8.2" rx="1.3" fill="#4fc3f7"/><path d="M41 926.3 h13.8 q1.3 0 1.3 1.3 v5.6 q0 1.3 -1.3 1.3 h-13.8 z" fill="#039be5"/>
<rect x="25.9" y="936.3" width="15.1" height="8.5" rx="1.3" fill="#4fc3f7"/><path d="M41 936.3 h13.8 q1.3 0 1.3 1.3 v5.9 q0 1.3 -1.3 1.3 h-13.8 z" fill="#039be5"/>
<path d="M25.9 954 v-6.1 q0 -1.3 1.3 -1.3 h13.8 v7.4 z" fill="#4fc3f7"/><path d="M41 946.6 h13.8 q1.3 0 1.3 1.3 v6.1 h-15.1 z" fill="#039be5"/>
</g>
</svg>
<div class="t" style="left:266.30px;top:188.56px;font-size:16px;line-height:22px;letter-spacing:0.580px;color:#000;">Memory pool:</div>
<div class="a" style="left:376px;top:184px;width:1100px;height:28px;background:#e1e1e1;box-sizing:border-box;border:1px solid #adadad;"></div>
<div class="t" style="left:389.80px;top:188.56px;font-size:16px;line-height:22px;letter-spacing:-0.184px;color:#000;">Heap</div>
<svg style="left:1455px;top:190px" width="16" height="14" viewBox="1455 190 16 14"><path d="M1458.5 195 l4.7 4.7 l4.7 -4.7" stroke="#3c3c3c" stroke-width="1.1" fill="none"/></svg>
<div class="a" style="left:266px;top:219px;width:1211px;height:1px;background:#cdcdcd;"></div>
<svg style="left:260px;top:220px" width="1220" height="700" viewBox="260 220 1220 700" shape-rendering="crispEdges">
<rect x="384" y="230" width="1" height="685" fill="#808080"/>
<rect x="384" y="220" width="1" height="10" fill="#000"/>
<rect x="396" y="224" width="1" height="691" fill="#c0c0c0"/>
<rect x="396" y="220" width="1" height="4" fill="#000"/>
<rect x="409" y="224" width="1" height="691" fill="#c0c0c0"/>
<rect x="409" y="220" width="1" height="4" fill="#000"/>
<rect x="421" y="224" width="1" height="691" fill="#c0c0c0"/>
<rect x="421" y="220" width="1" height="4" fill="#000"/>
<rect x="434" y="224" width="1" height="691" fill="#c0c0c0"/>
<rect x="434" y="220" width="1" height="4" fill="#000"/>
<rect x="446" y="224" width="1" height="691" fill="#c0c0c0"/>
<rect x="446" y="220" width="1" height="4" fill="#000"/>
<rect x="459" y="224" width="1" height="691" fill="#c0c0c0"/>
<rect x="459" y="220" width="1" height="4" fill="#000"/>
<rect x="471" y="224" width="1" height="691" fill="#c0c0c0"/>
<rect x="471" y="220" width="1" height="4" fill="#000"/>
<rect x="484" y="224" width="1" height="691" fill="#c0c0c0"/>
<rect x="484" y="220" width="1" height="4" fill="#000"/>
<rect x="496" y="224" width="1" height="691" fill="#c0c0c0"/>
<rect x="496" y="220" width="1" height="4" fill="#000"/>
<rect x="509" y="255" width="1" height="660" fill="#808080"/>
<rect x="509" y="220" width="1" height="10" fill="#000"/>
<rect x="521" y="224" width="1" height="691" fill="#c0c0c0"/>
<rect x="521" y="220" width="1" height="4" fill="#000"/>
<rect x="534" y="224" width="1" height="691" fill="#c0c0c0"/>
<rect x="534" y="220" width="1" height="4" fill="#000"/>
<rect x="546" y="224" width="1" height="691" fill="#c0c0c0"/>
<rect x="546" y="220" width="1" height="4" fill="#000"/>
<rect x="559" y="224" width="1" height="691" fill="#c0c0c0"/>
<rect x="559" y="220" width="1" height="4" fill="#000"/>
<rect x="571" y="224" width="1" height="691" fill="#c0c0c0"/>
<rect x="571" y="220" width="1" height="4" fill="#000"/>
<rect x="584" y="224" width="1" height="691" fill="#c0c0c0"/>
<rect x="584" y="220" width="1" height="4" fill="#000"/>
<rect x="596" y="224" width="1" height="691" fill="#c0c0c0"/>
<rect x="596" y="220" width="1" height="4" fill="#000"/>
<rect x="609" y="224" width="1" height="691" fill="#c0c0c0"/>
<rect x="609" y="220" width="1" height="4" fill="#000"/>
<rect x="621" y="224" width="1" height="691" fill="#c0c0c0"/>
<rect x="621" y="220" width="1" height="4" fill="#000"/>
<rect x="634" y="255" width="1" height="660" fill="#808080"/>
<rect x="634" y="220" width="1" height="10" fill="#000"/>
<rect x="646" y="224" width="1" height="691" fill="#c0c0c0"/>
<rect x="646" y="220" width="1" height="4" fill="#000"/>
<rect x="659" y="224" width="1" height="691" fill="#c0c0c0"/>
<rect x="659" y="220" width="1" height="4" fill="#000"/>
<rect x="671" y="224" width="1" height="691" fill="#c0c0c0"/>
<rect x="671" y="220" width="1" height="4" fill="#000"/>
<rect x="684" y="224" width="1" height="691" fill="#c0c0c0"/>
<rect x="684" y="220" width="1" height="4" fill="#000"/>
<rect x="696" y="224" width="1" height="691" fill="#c0c0c0"/>
<rect x="696" y="220" width="1" height="4" fill="#000"/>
<rect x="709" y="224" width="1" height="691" fill="#c0c0c0"/>
<rect x="709" y="220" width="1" height="4" fill="#000"/>
<rect x="721" y="224" width="1" height="691" fill="#c0c0c0"/>
<rect x="721" y="220" width="1" height="4" fill="#000"/>
<rect x="734" y="224" width="1" height="691" fill="#c0c0c0"/>
<rect x="734" y="220" width="1" height="4" fill="#000"/>
<rect x="746" y="224" width="1" height="691" fill="#c0c0c0"/>
<rect x="746" y="220" width="1" height="4" fill="#000"/>
<rect x="759" y="255" width="1" height="660" fill="#808080"/>
<rect x="759" y="220" width="1" height="10" fill="#000"/>
<rect x="771" y="224" width="1" height="691" fill="#c0c0c0"/>
<rect x="771" y="220" width="1" height="4" fill="#000"/>
<rect x="784" y="224" width="1" height="691" fill="#c0c0c0"/>
<rect x="784" y="220" width="1" height="4" fill="#000"/>
<rect x="796" y="224" width="1" height="691" fill="#c0c0c0"/>
<rect x="796" y="220" width="1" height="4" fill="#000"/>
<rect x="809" y="224" width="1" height="691" fill="#c0c0c0"/>
<rect x="809" y="220" width="1" height="4" fill="#000"/>
<rect x="821" y="224" width="1" height="691" fill="#c0c0c0"/>
<rect x="821" y="220" width="1" height="4" fill="#000"/>
<rect x="834" y="224" width="1" height="691" fill="#c0c0c0"/>
<rect x="834" y="220" width="1" height="4" fill="#000"/>
<rect x="846" y="224" width="1" height="691" fill="#c0c0c0"/>
<rect x="846" y="220" width="1" height="4" fill="#000"/>
<rect x="859" y="224" width="1" height="691" fill="#c0c0c0"/>
<rect x="859" y="220" width="1" height="4" fill="#000"/>
<rect x="871" y="224" width="1" height="691" fill="#c0c0c0"/>
<rect x="871" y="220" width="1" height="4" fill="#000"/>
<rect x="884" y="255" width="1" height="660" fill="#808080"/>
<rect x="884" y="220" width="1" height="10" fill="#000"/>
<rect x="896" y="224" width="1" height="691" fill="#c0c0c0"/>
<rect x="896" y="220" width="1" height="4" fill="#000"/>
<rect x="909" y="224" width="1" height="691" fill="#c0c0c0"/>
<rect x="909" y="220" width="1" height="4" fill="#000"/>
<rect x="921" y="224" width="1" height="691" fill="#c0c0c0"/>
<rect x="921" y="220" width="1" height="4" fill="#000"/>
<rect x="934" y="224" width="1" height="691" fill="#c0c0c0"/>
<rect x="934" y="220" width="1" height="4" fill="#000"/>
<rect x="946" y="224" width="1" height="691" fill="#c0c0c0"/>
<rect x="946" y="220" width="1" height="4" fill="#000"/>
<rect x="959" y="224" width="1" height="691" fill="#c0c0c0"/>
<rect x="959" y="220" width="1" height="4" fill="#000"/>
<rect x="971" y="224" width="1" height="691" fill="#c0c0c0"/>
<rect x="971" y="220" width="1" height="4" fill="#000"/>
<rect x="984" y="224" width="1" height="691" fill="#c0c0c0"/>
<rect x="984" y="220" width="1" height="4" fill="#000"/>
<rect x="996" y="224" width="1" height="691" fill="#c0c0c0"/>
<rect x="996" y="220" width="1" height="4" fill="#000"/>
<rect x="1009" y="255" width="1" height="660" fill="#808080"/>
<rect x="1009" y="220" width="1" height="10" fill="#000"/>
<rect x="1021" y="224" width="1" height="691" fill="#c0c0c0"/>
<rect x="1021" y="220" width="1" height="4" fill="#000"/>
<rect x="1034" y="224" width="1" height="691" fill="#c0c0c0"/>
<rect x="1034" y="220" width="1" height="4" fill="#000"/>
<rect x="1046" y="224" width="1" height="691" fill="#c0c0c0"/>
<rect x="1046" y="220" width="1" height="4" fill="#000"/>
<rect x="1059" y="224" width="1" height="691" fill="#c0c0c0"/>
<rect x="1059" y="220" width="1" height="4" fill="#000"/>
<rect x="1071" y="224" width="1" height="691" fill="#c0c0c0"/>
<rect x="1071" y="220" width="1" height="4" fill="#000"/>
<rect x="1084" y="224" width="1" height="691" fill="#c0c0c0"/>
<rect x="1084" y="220" width="1" height="4" fill="#000"/>
<rect x="1096" y="224" width="1" height="691" fill="#c0c0c0"/>
<rect x="1096" y="220" width="1" height="4" fill="#000"/>
<rect x="1109" y="224" width="1" height="691" fill="#c0c0c0"/>
<rect x="1109" y="220" width="1" height="4" fill="#000"/>
<rect x="1121" y="224" width="1" height="691" fill="#c0c0c0"/>
<rect x="1121" y="220" width="1" height="4" fill="#000"/>
<rect x="1134" y="255" width="1" height="660" fill="#808080"/>
<rect x="1134" y="220" width="1" height="10" fill="#000"/>
<rect x="1146" y="224" width="1" height="691" fill="#c0c0c0"/>
<rect x="1146" y="220" width="1" height="4" fill="#000"/>
<rect x="1159" y="224" width="1" height="691" fill="#c0c0c0"/>
<rect x="1159" y="220" width="1" height="4" fill="#000"/>
<rect x="1171" y="224" width="1" height="691" fill="#c0c0c0"/>
<rect x="1171" y="220" width="1" height="4" fill="#000"/>
<rect x="1184" y="224" width="1" height="691" fill="#c0c0c0"/>
<rect x="1184" y="220" width="1" height="4" fill="#000"/>
<rect x="1196" y="224" width="1" height="691" fill="#c0c0c0"/>
<rect x="1196" y="220" width="1" height="4" fill="#000"/>
<rect x="1209" y="224" width="1" height="691" fill="#c0c0c0"/>
<rect x="1209" y="220" width="1" height="4" fill="#000"/>
<rect x="1221" y="224" width="1" height="691" fill="#c0c0c0"/>
<rect x="1221" y="220" width="1" height="4" fill="#000"/>
<rect x="1234" y="224" width="1" height="691" fill="#c0c0c0"/>
<rect x="1234" y="220" width="1" height="4" fill="#000"/>
<rect x="1246" y="224" width="1" height="691" fill="#c0c0c0"/>
<rect x="1246" y="220" width="1" height="4" fill="#000"/>
<rect x="1259" y="255" width="1" height="660" fill="#808080"/>
<rect x="1259" y="220" width="1" height="10" fill="#000"/>
<rect x="1271" y="224" width="1" height="691" fill="#c0c0c0"/>
<rect x="1271" y="220" width="1" height="4" fill="#000"/>
<rect x="1284" y="224" width="1" height="691" fill="#c0c0c0"/>
<rect x="1284" y="220" width="1" height="4" fill="#000"/>
<rect x="1296" y="224" width="1" height="691" fill="#c0c0c0"/>
<rect x="1296" y="220" width="1" height="4" fill="#000"/>
<rect x="1309" y="224" width="1" height="691" fill="#c0c0c0"/>
<rect x="1309" y="220" width="1" height="4" fill="#000"/>
<rect x="1321" y="224" width="1" height="691" fill="#c0c0c0"/>
<rect x="1321" y="220" width="1" height="4" fill="#000"/>
<rect x="1334" y="224" width="1" height="691" fill="#c0c0c0"/>
<rect x="1334" y="220" width="1" height="4" fill="#000"/>
<rect x="1346" y="224" width="1" height="691" fill="#c0c0c0"/>
<rect x="1346" y="220" width="1" height="4" fill="#000"/>
<rect x="1359" y="224" width="1" height="691" fill="#c0c0c0"/>
<rect x="1359" y="220" width="1" height="4" fill="#000"/>
<rect x="1371" y="224" width="1" height="691" fill="#c0c0c0"/>
<rect x="1371" y="220" width="1" height="4" fill="#000"/>
<rect x="1384" y="255" width="1" height="660" fill="#808080"/>
<rect x="1384" y="220" width="1" height="10" fill="#000"/>
<rect x="1396" y="224" width="1" height="691" fill="#c0c0c0"/>
<rect x="1396" y="220" width="1" height="4" fill="#000"/>
<rect x="1409" y="224" width="1" height="691" fill="#c0c0c0"/>
<rect x="1409" y="220" width="1" height="4" fill="#000"/>
<rect x="1421" y="224" width="1" height="691" fill="#c0c0c0"/>
<rect x="1421" y="220" width="1" height="4" fill="#000"/>
<rect x="1434" y="224" width="1" height="691" fill="#c0c0c0"/>
<rect x="1434" y="220" width="1" height="4" fill="#000"/>
<rect x="1446" y="224" width="1" height="691" fill="#c0c0c0"/>
<rect x="1446" y="220" width="1" height="4" fill="#000"/>
<rect x="1459" y="224" width="1" height="691" fill="#c0c0c0"/>
<rect x="1459" y="220" width="1" height="4" fill="#000"/>
<rect x="1471" y="224" width="1" height="691" fill="#c0c0c0"/>
<rect x="1471" y="220" width="1" height="4" fill="#000"/>
<rect x="364" y="873" width="19" height="1" fill="#c0c0c0"/>
<rect x="384" y="873" width="1093" height="1" fill="#c0c0c0"/>
<rect x="358" y="873" width="6" height="1" fill="#000"/>
<rect x="364" y="832" width="19" height="1" fill="#c0c0c0"/>
<rect x="384" y="832" width="1093" height="1" fill="#c0c0c0"/>
<rect x="358" y="832" width="6" height="1" fill="#000"/>
<rect x="364" y="791" width="19" height="1" fill="#c0c0c0"/>
<rect x="384" y="791" width="1093" height="1" fill="#c0c0c0"/>
<rect x="358" y="791" width="6" height="1" fill="#000"/>
<rect x="364" y="750" width="19" height="1" fill="#c0c0c0"/>
<rect x="384" y="750" width="1093" height="1" fill="#c0c0c0"/>
<rect x="358" y="750" width="6" height="1" fill="#000"/>
<rect x="364" y="708" width="19" height="1" fill="#808080"/>
<rect x="384" y="708" width="1093" height="1" fill="#808080"/>
<rect x="356" y="708" width="8" height="1" fill="#000"/>
<rect x="364" y="667" width="19" height="1" fill="#c0c0c0"/>
<rect x="384" y="667" width="1093" height="1" fill="#c0c0c0"/>
<rect x="358" y="667" width="6" height="1" fill="#000"/>
<rect x="364" y="626" width="19" height="1" fill="#c0c0c0"/>
<rect x="384" y="626" width="1093" height="1" fill="#c0c0c0"/>
<rect x="358" y="626" width="6" height="1" fill="#000"/>
<rect x="364" y="585" width="19" height="1" fill="#c0c0c0"/>
<rect x="384" y="585" width="1093" height="1" fill="#c0c0c0"/>
<rect x="358" y="585" width="6" height="1" fill="#000"/>
<rect x="364" y="543" width="19" height="1" fill="#c0c0c0"/>
<rect x="384" y="543" width="1093" height="1" fill="#c0c0c0"/>
<rect x="358" y="543" width="6" height="1" fill="#000"/>
<rect x="364" y="502" width="19" height="1" fill="#808080"/>
<rect x="384" y="502" width="1093" height="1" fill="#808080"/>
<rect x="356" y="502" width="8" height="1" fill="#000"/>
<rect x="364" y="461" width="19" height="1" fill="#c0c0c0"/>
<rect x="384" y="461" width="1093" height="1" fill="#c0c0c0"/>
<rect x="358" y="461" width="6" height="1" fill="#000"/>
<rect x="364" y="420" width="19" height="1" fill="#c0c0c0"/>
<rect x="384" y="420" width="1093" height="1" fill="#c0c0c0"/>
<rect x="358" y="420" width="6" height="1" fill="#000"/>
<rect x="364" y="378" width="19" height="1" fill="#c0c0c0"/>
<rect x="384" y="378" width="1093" height="1" fill="#c0c0c0"/>
<rect x="358" y="378" width="6" height="1" fill="#000"/>
<rect x="364" y="337" width="19" height="1" fill="#c0c0c0"/>
<rect x="384" y="337" width="1093" height="1" fill="#c0c0c0"/>
<rect x="358" y="337" width="6" height="1" fill="#000"/>
<rect x="364" y="296" width="19" height="1" fill="#808080"/>
<rect x="384" y="296" width="1093" height="1" fill="#808080"/>
<rect x="356" y="296" width="8" height="1" fill="#000"/>
<rect x="385" y="379" width="475" height="522" fill="#00b000"/>
<rect x="385" y="900" width="475" height="15" fill="#0000b0"/>
<rect x="363" y="268" width="1" height="647" fill="#000"/>
<path d="M363.5 260.5 L369.3 272 H357.7 z" fill="#000" shape-rendering="auto"/>
</svg>
<div class="t" style="left:494.50px;top:230.46px;font-size:16px;line-height:22px;letter-spacing:-0.380px;color:#000;">0:10</div>
<div class="t" style="left:619.50px;top:230.46px;font-size:16px;line-height:22px;letter-spacing:-0.380px;color:#000;">0:20</div>
<div class="t" style="left:744.50px;top:230.46px;font-size:16px;line-height:22px;letter-spacing:-0.380px;color:#000;">0:30</div>
<div class="t" style="left:869.50px;top:230.46px;font-size:16px;line-height:22px;letter-spacing:-0.380px;color:#000;">0:40</div>
<div class="t" style="left:994.50px;top:230.46px;font-size:16px;line-height:22px;letter-spacing:-0.380px;color:#000;">0:50</div>
<div class="t" style="left:1119.50px;top:230.46px;font-size:16px;line-height:22px;letter-spacing:-0.380px;color:#000;">1:00</div>
<div class="t" style="left:1244.50px;top:230.46px;font-size:16px;line-height:22px;letter-spacing:-0.380px;color:#000;">1:10</div>
<div class="t" style="left:1369.50px;top:230.46px;font-size:16px;line-height:22px;letter-spacing:-0.380px;color:#000;">1:20</div>
<div class="t" style="left:295.70px;top:287.46px;font-size:16px;line-height:22px;letter-spacing:-0.248px;color:#000;">300 MB</div>
<div class="t" style="left:295.70px;top:493.46px;font-size:16px;line-height:22px;letter-spacing:-0.248px;color:#000;">200 MB</div>
<div class="t" style="left:295.70px;top:699.46px;font-size:16px;line-height:22px;letter-spacing:-0.248px;color:#000;">100 MB</div>
<svg style="left:270px;top:925px" width="620" height="20" viewBox="270 925 620 20" shape-rendering="crispEdges">
<rect x="276.5" y="931.5" width="20" height="8" fill="#00b400" stroke="#0a0a0a" stroke-width="1"/>
<rect x="447.5" y="931.5" width="20" height="8" fill="#0000b4" stroke="#0a0a0a" stroke-width="1"/>
<rect x="627.5" y="931.5" width="20" height="8" fill="#00b400" stroke="#0a0a0a" stroke-width="1"/><rect x="628" y="932" width="9" height="7" fill="#0000b4"/>
<rect x="858.5" y="931.5" width="20" height="8" fill="#840000" stroke="#0a0a0a" stroke-width="1"/>
</svg>
<div class="t" style="left:304.70px;top:924.06px;font-size:16px;line-height:22px;letter-spacing:-0.264px;color:#000;">Free size: 253 MB</div>
<div class="t" style="left:475.60px;top:924.06px;font-size:16px;line-height:22px;letter-spacing:-0.231px;color:#000;">Used size: 7.13 MB</div>
<div class="t" style="left:655.40px;top:924.06px;font-size:16px;line-height:22px;letter-spacing:0.047px;color:#000;">Committed size: 260.1 MB</div>
<div class="t" style="left:885.20px;top:924.06px;font-size:16px;line-height:22px;letter-spacing:0.023px;color:#000;">Maximum: 4244.6 MB</div>
<div class="a" style="left:1375px;top:925px;width:30px;height:30px;background:#e1e1e1;box-sizing:border-box;border:1px solid #adadad;"></div>
<div class="a" style="left:1407px;top:925px;width:30px;height:30px;background:#f1f1f1;box-sizing:border-box;border:1px solid #dadada;"></div>
<div class="a" style="left:1446px;top:925px;width:30px;height:30px;background:#e5f1fb;box-sizing:border-box;border:1px solid #0078d7;box-shadow:inset 0 0 0 1px rgba(0,120,215,.28);"></div>
<svg style="left:1370px;top:920px" width="110" height="40" viewBox="1370 920 110 40">
<path d="M1388.3 941.2 L1381.6 947.4" stroke="#ff9800" stroke-width="3.2"/>
<path d="M1389.6 939.8 L1387.6 941.8" stroke="#78909c" stroke-width="2"/>
<circle cx="1392.8" cy="935.9" r="5.6" fill="#fff" stroke="#78909c" stroke-width="1.2"/>
<path d="M1392.8 933.2 v5.4 M1390.1 935.9 h5.4" stroke="#5da62a" stroke-width="1.6"/>
<path d="M1421.6 940.2 L1414.2 947.4" stroke="#c6c6c6" stroke-width="3" stroke-linecap="round"/>
<circle cx="1425.3" cy="935.9" r="6.1" fill="#cacaca"/>
<path d="M1423 935.9 h4.6" stroke="#d9d9d9" stroke-width="1.4"/>
<path d="M1451.5 930.3 V948 M1470.7 930.3 V948" stroke="#546e7a" stroke-width="1.2"/>
<path d="M1453 939.2 l3.2 -2 v4 z M1469.2 939.2 l-3.2 -2 v4 z" fill="#e64a19"/>
</svg>
<div class="a" style="left:650px;top:968px;width:1px;height:24px;background:#c9c9c9;"></div>
<div class="a" style="left:723px;top:968px;width:2px;height:24px;background:#c9c9c9;"></div>
<div class="a" style="left:922px;top:968px;width:1px;height:24px;background:#c9c9c9;"></div>
<div class="a" style="left:1152px;top:968px;width:1px;height:24px;background:#c9c9c9;"></div>
<div class="a" style="left:1240px;top:968px;width:1px;height:24px;background:#c9c9c9;"></div>
<div class="a" style="left:1328px;top:968px;width:1px;height:24px;background:#c9c9c9;"></div>
<svg style="left:640px;top:966px" width="740" height="26" viewBox="640 966 740 26">
<g fill="#9a9a9a">
<rect x="672" y="973" width="3" height="16.9"/>
<path d="M663.3 976.4 l2 -1.8 h9.7 v3.6 h-9.7 z"/>
<path d="M672 979.2 h7.8 l2 1.85 l-2 1.85 h-7.8 z"/>
</g>
<path d="M695 974 q3.5 -0.6 6.8 0.5 t6.9 0.8 v9.6 q-3.5 0.5 -6.9 -0.6 t-6.8 -0.5 z" fill="#ffb300"/>
<path d="M695 974 q3.5 -0.6 6.8 0.5 t6.9 0.8 L695 981.6 z" fill="#ffd54f"/>
<rect x="693.4" y="973" width="2" height="16.9" fill="#f7931e"/>
<circle cx="744.5" cy="980.5" r="7.6" fill="#777"/>
<path d="M749.87 975.13 A7.6 7.6 0 0 0 739.13 985.87 z" fill="#8c8c8c"/>
<g fill="none" stroke="#1b9be8" stroke-width="3">
<path d="M941.2 976.1 C936.2 976.1 934.3 978 934.3 980.7 C934.3 983.5 936.2 985.3 940.6 985.3"/>
<path d="M945.6 985.3 C950.8 985.3 952.7 983.5 952.7 980.7 C952.7 978 950.8 976.1 946.5 976.1"/>
</g>
<path d="M940.9 971.7 L945.3 976.1 L940.9 980.2 z" fill="#1b9be8"/>
<path d="M945.8 981 L941.9 985.3 L945.8 989.5 z" fill="#1b9be8"/>
<path d="M1348.2 974.9 h-3 q-1.6 0.1 -2.6 1.9 q-1.2 2.3 -2.7 3.7 q1.5 1.4 2.7 3.7 q1 1.8 2.6 1.9 h3 z" fill="#546e7a"/>
<path d="M1348.2 980.5 v5.6 h-3 q-1.6 -0.1 -2.6 -1.9 q-1.2 -2.3 -2.7 -3.7 z" fill="#455a64"/>
<rect x="1350" y="974" width="3.9" height="6.4" fill="#546e7a"/>
<rect x="1350" y="980.8" width="3.9" height="6" fill="#455a64"/>
<rect x="1350" y="980.2" width="3.9" height="0.8" fill="#78909c"/>
<rect x="1348" y="973.1" width="2" height="7.4" rx="0.5" fill="#78909c"/>
<rect x="1348" y="980.5" width="2" height="7.5" rx="0.5" fill="#5b7684"/>
<rect x="1353.9" y="976" width="6.1" height="1.9" rx="0.4" fill="#ffc61a"/>
<rect x="1353.9" y="983" width="6.1" height="1.9" rx="0.4" fill="#ffc61a"/>
</svg>
<div class="t" style="left:765.50px;top:971.16px;font-size:16px;line-height:22px;letter-spacing:0.206px;color:#000;">0 active recordings</div>
<div class="t" style="left:964.30px;top:971.16px;font-size:16px;line-height:22px;letter-spacing:0.331px;color:#000;">Auto-update 2 s</div>
<div class="t" style="left:1164.40px;top:971.16px;font-size:16px;line-height:22px;letter-spacing:0.139px;color:#000;">VM #3</div>
<div class="t" style="left:1251.20px;top:971.16px;font-size:16px;line-height:22px;letter-spacing:-0.160px;color:#000;">00:38</div>
<div class="t" style="left:1370.80px;top:971.16px;font-size:16px;line-height:22px;letter-spacing:0.224px;color:#000;">Profiling</div>
</body></html>
